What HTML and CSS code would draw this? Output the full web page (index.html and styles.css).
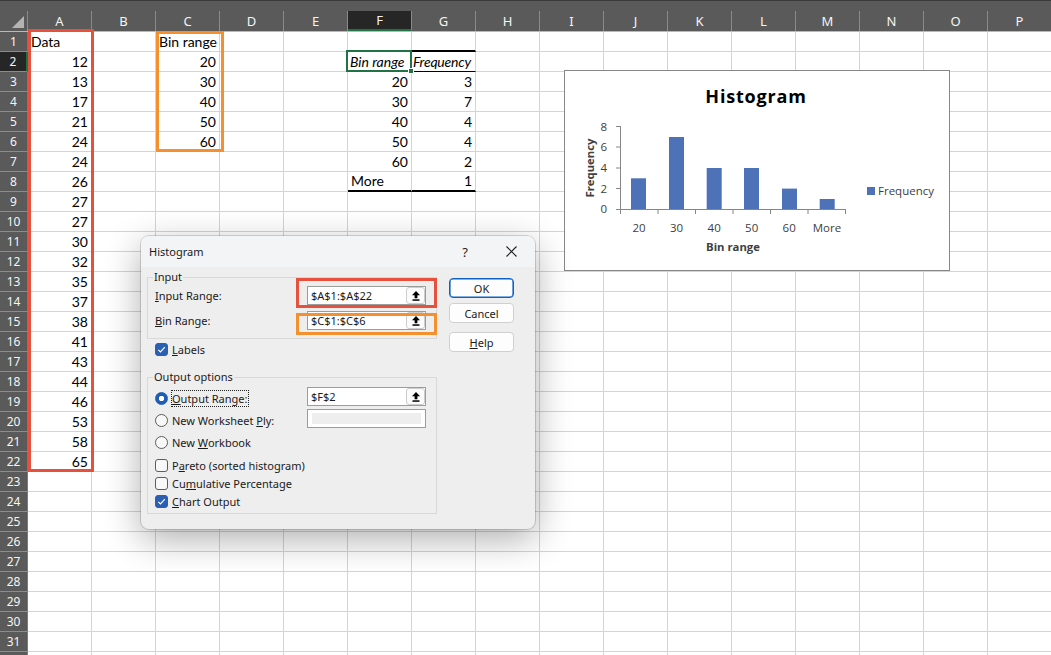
FILE: index.html
```html
<!DOCTYPE html>
<html>
<head>
<meta charset="utf-8">
<title>Histogram</title>
<link rel="stylesheet" href="styles.css">
</head>
<body>
<div class="sheet">
  <div class="colhead">
    <span class="corner"></span>
    <span>A</span><span>B</span><span>C</span><span>D</span><span>E</span><span class="on">F</span><span>G</span><span>H</span><span>I</span><span>J</span><span>K</span><span>L</span><span>M</span><span>N</span><span>O</span><span>P</span>
  </div>
  <div class="row"><b>1</b><span>Data</span><span></span><span>Bin range</span><span></span><span></span><span class="k2"></span><span class="k2"></span><span></span><span></span><span></span><span></span><span></span><span></span><span></span><span></span><span></span></div>
  <div class="row"><b class="on">2</b><span class="n">12</span><span></span><span class="n">20</span><span></span><span></span><span class="it k1">Bin range</span><span class="it k1 tight">Frequency</span><span></span><span></span><span></span><span></span><span></span><span></span><span></span><span></span><span></span></div>
  <div class="row"><b>3</b><span class="n">13</span><span></span><span class="n">30</span><span></span><span></span><span class="n">20</span><span class="n">3</span><span></span><span></span><span></span><span></span><span></span><span></span><span></span><span></span><span></span></div>
  <div class="row"><b>4</b><span class="n">17</span><span></span><span class="n">40</span><span></span><span></span><span class="n">30</span><span class="n">7</span><span></span><span></span><span></span><span></span><span></span><span></span><span></span><span></span><span></span></div>
  <div class="row"><b>5</b><span class="n">21</span><span></span><span class="n">50</span><span></span><span></span><span class="n">40</span><span class="n">4</span><span></span><span></span><span></span><span></span><span></span><span></span><span></span><span></span><span></span></div>
  <div class="row"><b>6</b><span class="n">24</span><span></span><span class="n">60</span><span></span><span></span><span class="n">50</span><span class="n">4</span><span></span><span></span><span></span><span></span><span></span><span></span><span></span><span></span><span></span></div>
  <div class="row"><b>7</b><span class="n">24</span><span></span><span></span><span></span><span></span><span class="n">60</span><span class="n">2</span><span></span><span></span><span></span><span></span><span></span><span></span><span></span><span></span><span></span></div>
  <div class="row"><b>8</b><span class="n">26</span><span></span><span></span><span></span><span></span><span class="k2">More</span><span class="n k2">1</span><span></span><span></span><span></span><span></span><span></span><span></span><span></span><span></span><span></span></div>
  <div class="row"><b>9</b><span class="n">27</span><span></span><span></span><span></span><span></span><span></span><span></span><span></span><span></span><span></span><span></span><span></span><span></span><span></span><span></span><span></span></div>
  <div class="row"><b>10</b><span class="n">27</span><span></span><span></span><span></span><span></span><span></span><span></span><span></span><span></span><span></span><span></span><span></span><span></span><span></span><span></span><span></span></div>
  <div class="row"><b>11</b><span class="n">30</span><span></span><span></span><span></span><span></span><span></span><span></span><span></span><span></span><span></span><span></span><span></span><span></span><span></span><span></span><span></span></div>
  <div class="row"><b>12</b><span class="n">32</span><span></span><span></span><span></span><span></span><span></span><span></span><span></span><span></span><span></span><span></span><span></span><span></span><span></span><span></span><span></span></div>
  <div class="row"><b>13</b><span class="n">35</span><span></span><span></span><span></span><span></span><span></span><span></span><span></span><span></span><span></span><span></span><span></span><span></span><span></span><span></span><span></span></div>
  <div class="row"><b>14</b><span class="n">37</span><span></span><span></span><span></span><span></span><span></span><span></span><span></span><span></span><span></span><span></span><span></span><span></span><span></span><span></span><span></span></div>
  <div class="row"><b>15</b><span class="n">38</span><span></span><span></span><span></span><span></span><span></span><span></span><span></span><span></span><span></span><span></span><span></span><span></span><span></span><span></span><span></span></div>
  <div class="row"><b>16</b><span class="n">41</span><span></span><span></span><span></span><span></span><span></span><span></span><span></span><span></span><span></span><span></span><span></span><span></span><span></span><span></span><span></span></div>
  <div class="row"><b>17</b><span class="n">43</span><span></span><span></span><span></span><span></span><span></span><span></span><span></span><span></span><span></span><span></span><span></span><span></span><span></span><span></span><span></span></div>
  <div class="row"><b>18</b><span class="n">44</span><span></span><span></span><span></span><span></span><span></span><span></span><span></span><span></span><span></span><span></span><span></span><span></span><span></span><span></span><span></span></div>
  <div class="row"><b>19</b><span class="n">46</span><span></span><span></span><span></span><span></span><span></span><span></span><span></span><span></span><span></span><span></span><span></span><span></span><span></span><span></span><span></span></div>
  <div class="row"><b>20</b><span class="n">53</span><span></span><span></span><span></span><span></span><span></span><span></span><span></span><span></span><span></span><span></span><span></span><span></span><span></span><span></span><span></span></div>
  <div class="row"><b>21</b><span class="n">58</span><span></span><span></span><span></span><span></span><span></span><span></span><span></span><span></span><span></span><span></span><span></span><span></span><span></span><span></span><span></span></div>
  <div class="row"><b>22</b><span class="n">65</span><span></span><span></span><span></span><span></span><span></span><span></span><span></span><span></span><span></span><span></span><span></span><span></span><span></span><span></span><span></span></div>
  <div class="row"><b>23</b><span></span><span></span><span></span><span></span><span></span><span></span><span></span><span></span><span></span><span></span><span></span><span></span><span></span><span></span><span></span><span></span></div>
  <div class="row"><b>24</b><span></span><span></span><span></span><span></span><span></span><span></span><span></span><span></span><span></span><span></span><span></span><span></span><span></span><span></span><span></span><span></span></div>
  <div class="row"><b>25</b><span></span><span></span><span></span><span></span><span></span><span></span><span></span><span></span><span></span><span></span><span></span><span></span><span></span><span></span><span></span><span></span></div>
  <div class="row"><b>26</b><span></span><span></span><span></span><span></span><span></span><span></span><span></span><span></span><span></span><span></span><span></span><span></span><span></span><span></span><span></span><span></span></div>
  <div class="row"><b>27</b><span></span><span></span><span></span><span></span><span></span><span></span><span></span><span></span><span></span><span></span><span></span><span></span><span></span><span></span><span></span><span></span></div>
  <div class="row"><b>28</b><span></span><span></span><span></span><span></span><span></span><span></span><span></span><span></span><span></span><span></span><span></span><span></span><span></span><span></span><span></span><span></span></div>
  <div class="row"><b>29</b><span></span><span></span><span></span><span></span><span></span><span></span><span></span><span></span><span></span><span></span><span></span><span></span><span></span><span></span><span></span><span></span></div>
  <div class="row"><b>30</b><span></span><span></span><span></span><span></span><span></span><span></span><span></span><span></span><span></span><span></span><span></span><span></span><span></span><span></span><span></span><span></span></div>
  <div class="row"><b>31</b><span></span><span></span><span></span><span></span><span></span><span></span><span></span><span></span><span></span><span></span><span></span><span></span><span></span><span></span><span></span><span></span></div>
  <div class="row"><b></b><span></span><span></span><span></span><span></span><span></span><span></span><span></span><span></span><span></span><span></span><span></span><span></span><span></span><span></span><span></span><span></span></div>
</div>

<div class="selbox"><span class="handle"></span></div>
<div class="mark mark-red mark-data"></div>
<div class="mark mark-orange mark-bins"></div>

<div class="chart">
  <svg width="384" height="199" viewBox="565 71 384 199" font-family="'Open Sans', sans-serif">
    <text x="756" y="102.5" text-anchor="middle" font-size="18" font-weight="700" letter-spacing="0.8" fill="#000">Histogram</text>
    <g font-size="11.5" fill="#404040" text-anchor="end">
      <text x="607" y="130.8">8</text>
      <text x="607" y="150.8">6</text>
      <text x="607" y="171.8">4</text>
      <text x="607" y="192.8">2</text>
      <text x="607" y="213.4">0</text>
    </g>
    <g fill="#4e72b8">
      <rect x="631" y="178.3" width="15" height="31"/>
      <rect x="669" y="137" width="15" height="72.3"/>
      <rect x="706.7" y="168" width="15" height="41.3"/>
      <rect x="744" y="168" width="15" height="41.3"/>
      <rect x="782" y="188.6" width="15" height="20.7"/>
      <rect x="819.7" y="199" width="15" height="10.3"/>
    </g>
    <path d="M620.5 126 V209.5 M616 126.5 H620.5 M616 147 H620.5 M616 168 H620.5 M616 188.5 H620.5 M616 209.5 H846 M620.5 209.5 V214 M658 209.5 V214 M695.5 209.5 V214 M733 209.5 V214 M770.5 209.5 V214 M808 209.5 V214 M845.5 209.5 V214" stroke="#868686" stroke-width="1" fill="none"/>
    <g font-size="11.5" fill="#404040" text-anchor="middle">
      <text x="639" y="231.5">20</text>
      <text x="676.5" y="231.5">30</text>
      <text x="714.2" y="231.5">40</text>
      <text x="751.7" y="231.5">50</text>
      <text x="789.2" y="231.5">60</text>
      <text x="826.9" y="231.5">More</text>
    </g>
    <text x="733" y="251" text-anchor="middle" font-size="11.3" font-weight="700" fill="#404040">Bin range</text>
    <text x="590" y="172" text-anchor="middle" font-size="11.3" font-weight="700" fill="#404040" transform="rotate(-90 590 168)">Frequency</text>
    <rect x="867" y="187" width="8" height="8" fill="#4e72b8"/>
    <text x="878" y="195" font-size="11.5" fill="#404040">Frequency</text>
  </svg>
</div>

<div class="dlg">
  <div class="dlg-title">
    <span class="dlg-name">Histogram</span>
    <span class="dlg-help">?</span>
    <span class="dlg-close"><svg width="11" height="11" viewBox="0 0 11 11"><path d="M0.5 0.5 L10.5 10.5 M10.5 0.5 L0.5 10.5" stroke="#1f1f1f" stroke-width="1.1" fill="none"/></svg></span>
  </div>
  <div class="dlg-body">
    <div class="dlg-main">
      <fieldset class="grp grp-in">
        <legend>Input</legend>
        <div class="frow">
          <span><u>I</u>nput Range:</span>
          <div class="fld"><span class="fld-text">$A$1:$A$22</span><span class="pick"><svg width="8" height="10" viewBox="0 0 8 10"><polygon points="4,0 0,4.2 2.6,4.2 2.6,7.2 5.4,7.2 5.4,4.2 8,4.2" fill="#000"/><rect x="0.5" y="8.3" width="7" height="1.5" fill="#000"/></svg></span></div>
        </div>
        <div class="frow frow-2">
          <span><u>B</u>in Range:</span>
          <div class="fld"><span class="fld-text">$C$1:$C$6</span><span class="pick"><svg width="8" height="10" viewBox="0 0 8 10"><polygon points="4,0 0,4.2 2.6,4.2 2.6,7.2 5.4,7.2 5.4,4.2 8,4.2" fill="#000"/><rect x="0.5" y="8.3" width="7" height="1.5" fill="#000"/></svg></span></div>
        </div>
      </fieldset>
      <div class="crow crow-labels"><span class="cb on"><svg width="11" height="11" viewBox="0 0 11 11"><path d="M2.3 5.8 L4.5 8 L8.8 3.2" stroke="#fff" stroke-width="1.2" fill="none"/></svg></span><span><u>L</u>abels</span></div>
      <fieldset class="grp grp-out">
        <legend>Output options</legend>
        <div class="orow">
          <span class="rb on"></span><span class="focus"><u>O</u>utput Range:</span>
          <div class="fld"><span class="fld-text">$F$2</span><span class="pick"><svg width="8" height="10" viewBox="0 0 8 10"><polygon points="4,0 0,4.2 2.6,4.2 2.6,7.2 5.4,7.2 5.4,4.2 8,4.2" fill="#000"/><rect x="0.5" y="8.3" width="7" height="1.5" fill="#000"/></svg></span></div>
        </div>
        <div class="orow">
          <span class="rb"></span><span>New Worksheet <u>P</u>ly:</span>
          <div class="fld fld-dis"><span class="dis-in"></span></div>
        </div>
        <div class="orow">
          <span class="rb"></span><span>New <u>W</u>orkbook</span>
        </div>
        <div class="crow crow-first"><span class="cb"></span><span>P<u>a</u>reto (sorted histogram)</span></div>
        <div class="crow"><span class="cb"></span><span>Cu<u>m</u>ulative Percentage</span></div>
        <div class="crow"><span class="cb on"><svg width="11" height="11" viewBox="0 0 11 11"><path d="M2.3 5.8 L4.5 8 L8.8 3.2" stroke="#fff" stroke-width="1.2" fill="none"/></svg></span><span><u>C</u>hart Output</span></div>
      </fieldset>
    </div>
    <div class="dlg-btns">
      <button class="btn btn-def">OK</button>
      <button class="btn btn-cancel">Cancel</button>
      <button class="btn btn-help"><u>H</u>elp</button>
    </div>
  </div>
</div>

<div class="mark mark-red mark-in"></div>
<div class="mark mark-orange mark-bin"></div>
</body>
</html>
```

FILE: styles.css
```css
* { box-sizing: border-box; }
html, body { margin: 0; padding: 0; }
body {
  width: 1051px;
  height: 655px;
  overflow: hidden;
  position: relative;
  background: #fff;
  font-family: Lato, "Liberation Sans", sans-serif;
}

/* ---------- sheet ---------- */
.sheet { width: 1051px; }
.colhead {
  display: grid;
  grid-template-columns: 28px repeat(16, 64px);
  height: 32px;
  background: #5a5a5a;
  border-top: 1px solid #3a3a3a;
  padding-top: 10px;
  border-bottom: 1px solid #b9b9b9;
}
.colhead > span {
  border-right: 1px solid #8a8a8a;
  color: #f5f5f5;
  font: 13px "Noto Sans", sans-serif;
  line-height: 20px;
  text-align: center;
}
.colhead > .on {
  background: #262626;
  border-bottom: 2px solid #217346;
  line-height: 18px;
}
.colhead > .corner {
  display: flex;
  justify-content: flex-end;
  align-items: flex-end;
  padding: 0 3px 3px 0;
}
.corner::after {
  content: "";
  width: 0;
  height: 0;
  border-left: 12px solid transparent;
  border-bottom: 12px solid #b4b4b4;
}
.row {
  display: grid;
  grid-template-columns: 28px repeat(16, 64px);
  height: 20px;
}
.row > b {
  background: #5a5a5a;
  color: #f5f5f5;
  font: 400 12px "Noto Sans", sans-serif;
  line-height: 19px;
  text-align: center;
  border-bottom: 1px solid #8c8c8c;
  border-right: 1px solid #7a7a7a;
}
.row > b.on {
  background: #262626;
  border-right: 2px solid #217346;
}
.row > span {
  border-right: 1px solid #d4d4d4;
  border-bottom: 1px solid #d4d4d4;
  padding: 0 3px;
  font-size: 14px;
  line-height: 19px;
  white-space: nowrap;
  color: #000;
}
.row > .n { text-align: right; }
.row > .it { font-style: italic; padding-left: 2px; }
.row > .tight { padding-left: 1px; letter-spacing: -0.2px; }
.row > .k1 { border-bottom-color: #000; }
.row > .k2 { border-bottom: 2px solid #000; line-height: 18px; }

/* ---------- overlays on the sheet ---------- */
.selbox {
  position: absolute;
  left: 346px;
  top: 50px;
  width: 66px;
  height: 22px;
  border: 2px solid #217346;
}
.handle {
  position: absolute;
  right: -4px;
  bottom: -4px;
  width: 6px;
  height: 6px;
  background: #217346;
  border: 1px solid #fff;
}
.mark {
  position: absolute;
  border: 3px solid;
}
.mark-red { border-color: #e8503e; }
.mark-orange { border-color: #f4912e; }
.mark-data { left: 28px; top: 29px; width: 66px; height: 443px; }
.mark-bins { left: 156px; top: 31px; width: 68px; height: 121px; }
.mark-in { left: 296px; top: 278px; width: 141px; height: 30px; }
.mark-bin { left: 296px; top: 313px; width: 141px; height: 22px; }

/* ---------- chart ---------- */
.chart {
  position: absolute;
  left: 564px;
  top: 70px;
  width: 386px;
  height: 201px;
  border: 1px solid #878787;
  background: #fff;
}
.chart svg { display: block; }

/* ---------- dialog ---------- */
.dlg {
  position: absolute;
  left: 141px;
  top: 236px;
  width: 394px;
  height: 293px;
  border-radius: 8px;
  background: #eeeeee;
  box-shadow: 0 10px 36px rgba(0, 0, 0, 0.32), 0 0 0 1px rgba(0, 0, 0, 0.14);
  overflow: hidden;
  font: 11px "Noto Sans", sans-serif;
  color: #1a1a1a;
}
.dlg-title {
  height: 31px;
  background: #f3f4f6;
  display: flex;
  align-items: center;
  padding-left: 8px;
}
.dlg-name { font-size: 11px; }
.dlg-help {
  margin-left: auto;
  width: 46px;
  text-align: center;
  font-size: 13px;
  color: #1f1f1f;
}
.dlg-close {
  width: 46px;
  display: flex;
  justify-content: center;
  align-items: center;
  margin-right: 1px;
}
.dlg-body {
  display: flex;
  padding: 2px 0 0 6px;
}
.dlg-main { width: 290px; }
.grp {
  margin: 0;
  min-width: 0;
  border: 1px solid #d8d8d8;
  padding: 0 10px 8px 7px;
}
.grp legend {
  padding: 0 1px;
  margin-left: -2px;
  line-height: 16px;
}
.grp-out { margin-top: 11px; padding-bottom: 3px; }
.frow {
  display: flex;
  align-items: center;
  height: 19px;
  margin-top: 1px;
}
.frow-2 { margin-top: 6px; }
.fld {
  margin-left: auto;
  width: 119px;
  height: 19px;
  border: 1px solid #9c9c9c;
  background: #fff;
  display: flex;
  align-items: center;
  padding-left: 3px;
}
.fld-text { flex: 1; }
.pick {
  width: 19px;
  height: 17px;
  border: 1px solid #cdcdcd;
  border-radius: 3px;
  background: #fbfbfb;
  display: flex;
  justify-content: center;
  align-items: center;
}
.fld-dis { padding: 3px 4px; }
.dis-in { flex: 1; height: 100%; background: #eeeeee; }
.crow {
  display: flex;
  align-items: center;
  height: 18px;
}
.crow-labels { margin-top: 1px; padding-left: 8px; }
.crow-first { margin-top: 3px; }
.orow {
  display: flex;
  align-items: center;
  height: 22px;
}
.orow:first-of-type { margin-top: 2px; }
.orow .fld { align-self: flex-start; }
.cb {
  width: 13px;
  height: 13px;
  border: 1px solid #5c5c5c;
  border-radius: 3px;
  background: #f8f8f8;
  margin-right: 4px;
  display: flex;
  justify-content: center;
  align-items: center;
}
.cb.on { background: #2a5fb3; border-color: #2a5fb3; }
.rb {
  width: 13px;
  height: 13px;
  border: 1px solid #5c5c5c;
  border-radius: 50%;
  background: #f8f8f8;
  margin-right: 4px;
}
.rb.on {
  border-color: #1d5db5;
  background: radial-gradient(circle, #fff 0 2.4px, #1d5db5 3px);
  margin-right: 3px;
}
.focus {
  border: 1px dotted #222;
  line-height: 15px;
  padding-right: 1px;
}
.dlg-btns {
  display: flex;
  flex-direction: column;
  margin-left: 12px;
  padding-top: 9px;
}
.btn {
  width: 65px;
  height: 20px;
  padding: 0;
  border: 1px solid #d0d0d0;
  border-radius: 4px;
  background: #fdfdfd;
  font: 11px "Noto Sans", sans-serif;
  color: #1a1a1a;
  line-height: 17px;
}
.btn-def { border-color: #0f62c4; box-shadow: inset 0 0 0 0.6px #0f62c4; }
.btn-cancel { margin-top: 5px; }
.btn-help { margin-top: 9px; }
```
